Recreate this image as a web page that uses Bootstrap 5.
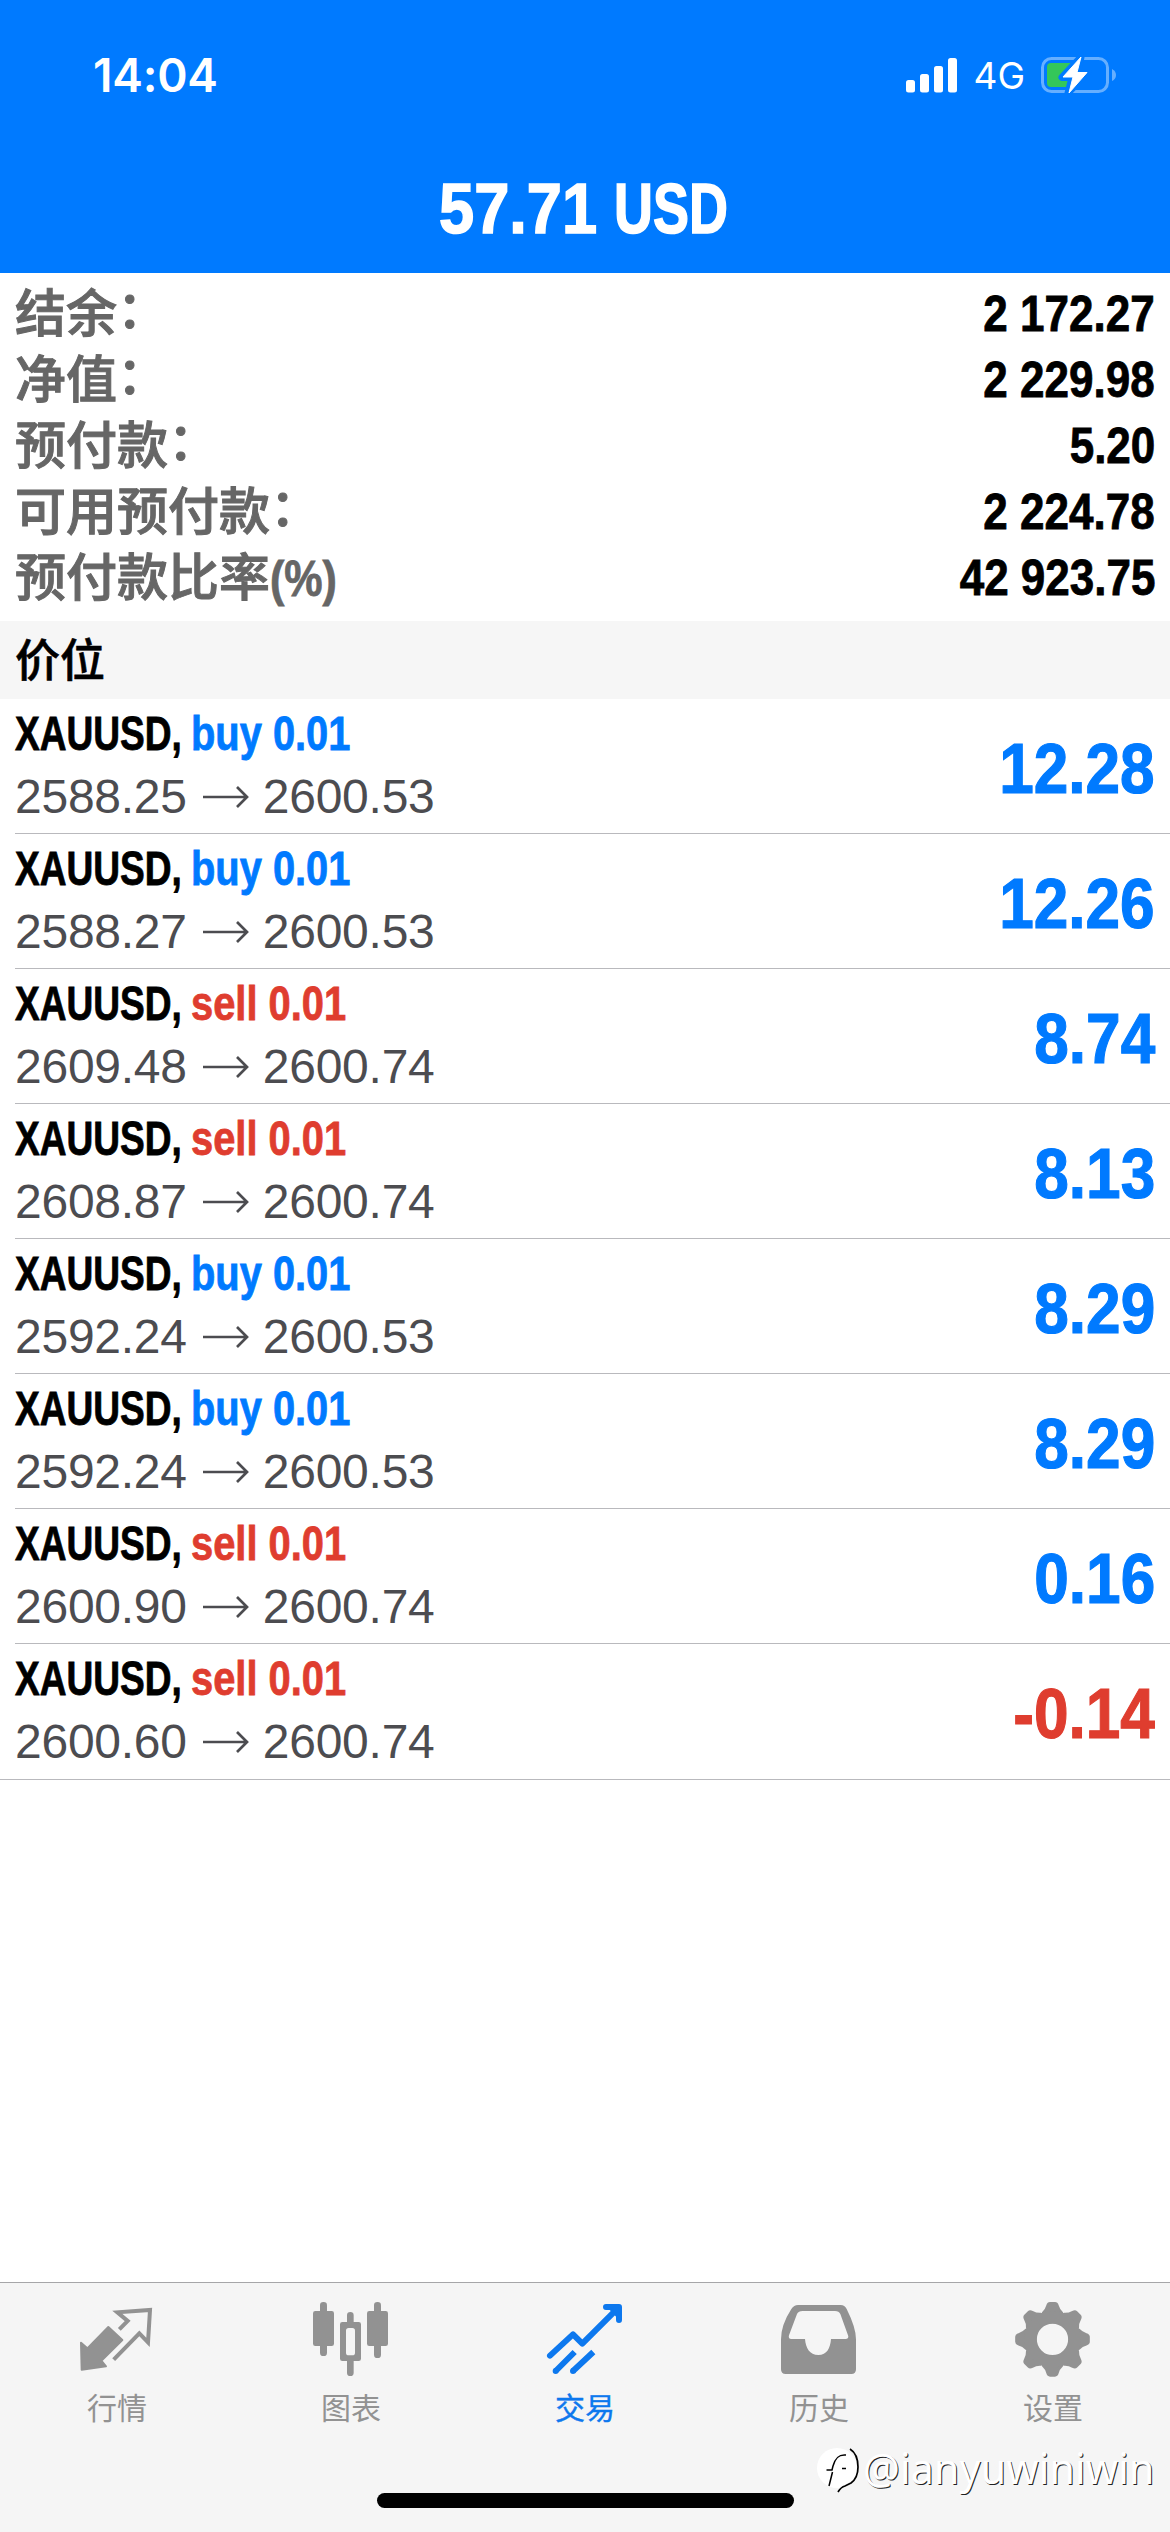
<!DOCTYPE html>
<html lang="zh-CN">
<head>
<meta charset="utf-8">
<meta name="viewport" content="width=device-width, initial-scale=1">
<title>57.71 USD</title>
<link href="https://cdn.jsdelivr.net/npm/bootstrap@5.3.0/dist/css/bootstrap.min.css" rel="stylesheet">
<style>
  body { width: 1170px; height: 2532px; margin: 0; overflow: hidden; background: #fff; color: #000; font-family: "Liberation Sans", "Noto Sans CJK SC", sans-serif; }
  .app-head { height: 273px; background: #007aff; color: #fff; }
  .status { height: 150px; padding: 0 53px 0 93px; }
  .clock { font: 600 46px/1 Inter, sans-serif; letter-spacing: -.2px; }
  .net { font: 400 37px/1 Inter, sans-serif; margin: 0 16px 0 15px; }
  .cond { display: inline-block; font-weight: 700; white-space: pre; transform-origin: 0 50%; -webkit-text-stroke: .8px currentColor; }
  .balance { font-size: 71px; line-height: 117px; padding-left: 439px; }
  .balance .cond { -webkit-text-stroke-width: 1.6px; }
  .balance .num { width: 175px; transform: scaleX(.89); }
  .balance .cur { transform: scaleX(.76); }
  .summary { padding: 8px 15px 10px 15px; }
  .sum-row { height: 66px; line-height: 66px; }
  .sum-label { font: 500 51px/58px "Noto Sans CJK SC", sans-serif; color: #666; padding-bottom: 8px; -webkit-text-stroke: 1px #666; }
  .colon { vertical-align: 4px; line-height: 1; }
  .sum-label .cond { font-family: "Liberation Sans", sans-serif; font-size: 50px; transform: scaleX(.86); }
  .sum-value { font-size: 50px; transform: scaleX(.88); transform-origin: 100% 50%; }
  .section-bar { height: 78px; background: #f6f6f6; padding-left: 15px; font: 500 45px/73px "Noto Sans CJK SC", sans-serif; -webkit-text-stroke: .6px #000; }
  .deal { height: 135px; margin-left: 15px; padding: 4px 15px 0 0; border-bottom: 1px solid #b9b9bd; }
  .deal:last-child { margin-left: 0; padding-left: 15px; height: 136px; }
  .deal-name { font-size: 48px; line-height: 62px; height: 62px; }
  .deal-name .sym { width: 176px; transform: scaleX(.772); }
  .deal-name .side { transform: scaleX(.83); }
  .deal-price { font-size: 48px; line-height: 64px; height: 64px; color: #4c4c50; letter-spacing: -.25px; }
  .arrow { width: 47px; height: 24px; margin: 0 14px 0 15px; }
  .profit { font-size: 71px; line-height: 132px; transform: scaleX(.875); transform-origin: 100% 50%; -webkit-text-stroke-width: 1.2px; }
  .up { color: #007aff; }
  .down { color: #df3d2f; }
  .tabs { height: 250px; background: #f5f5f5; border-top: 1px solid #a6a6a8; }
  .tab { color: #929292; padding-top: 17px; font: 400 30px/44px "Noto Sans CJK SC", sans-serif; }
  .tab svg { width: 78px; height: 78px; margin-bottom: 6px; }
  .tab.active { color: #0d78ee; -webkit-text-stroke: .4px currentColor; }
  .home-bar { width: 417px; height: 15px; border-radius: 8px; background: #000; left: 377px; top: 2493px; }
  .mark-by { left: 817px; top: 2445px; }
  .mark-by svg { width: 46px; height: 48px; }
  .mark-by span { font: 400 41px/46px "Noto Sans", sans-serif; letter-spacing: .2px; color: #fff; text-shadow: 1px 1px 0 #222; white-space: nowrap; padding-bottom: 4px; }
</style>
</head>
<body class="d-flex flex-column position-relative">
<header class="app-head">
  <div class="status d-flex align-items-center">
    <span class="clock me-auto">14:04</span>
    <svg width="52" height="35" viewBox="0 0 52 35" fill="#fff"><rect y="22" width="9" height="12.500" rx="2.500"/><rect x="14" y="16" width="9" height="18.500" rx="2.500"/><rect x="28" y="8" width="9" height="26.500" rx="2.500"/><rect x="42" width="9" height="34.500" rx="2.500"/></svg>
    <span class="net">4G</span>
    <svg width="76" height="40" viewBox="0 0 76 40"><rect x="1.500" y="3.500" width="65" height="33" rx="9" fill="none" stroke="#66afff" stroke-width="3"/><path d="M71 14q4 2 4 6t-4 6z" fill="#66afff"/><rect x="6" y="8" width="27" height="24" rx="4" fill="#34c759"/><path d="M40 2 21 22.500h10L27 38 47 17H37z" fill="#fff" stroke="#007aff" stroke-width="7" stroke-linejoin="round"/><path d="M40 2 22 22h10L28 38 46 17.500H36z" fill="#fff" stroke="#fff" stroke-width="1" stroke-linejoin="round"/></svg>
  </div>
  <div class="balance d-flex"><span class="cond num">57.71</span><span class="cond cur">USD</span></div>
</header>

<section class="summary">
  <div class="sum-row d-flex justify-content-between"><div class="sum-label">结余<span class="colon">：</span></div><div class="cond sum-value">2 172.27</div></div>
  <div class="sum-row d-flex justify-content-between"><div class="sum-label">净值<span class="colon">：</span></div><div class="cond sum-value">2 229.98</div></div>
  <div class="sum-row d-flex justify-content-between"><div class="sum-label">预付款<span class="colon">：</span></div><div class="cond sum-value">5.20</div></div>
  <div class="sum-row d-flex justify-content-between"><div class="sum-label">可用预付款<span class="colon">：</span></div><div class="cond sum-value">2 224.78</div></div>
  <div class="sum-row d-flex justify-content-between"><div class="sum-label">预付款比率<span class="cond">(%)</span></div><div class="cond sum-value">42 923.75</div></div>
</section>

<div class="section-bar">价位</div>

<main class="flex-grow-1" id="deals"></main>

<nav class="tabs d-flex">
  <div class="tab col d-flex flex-column align-items-center">
    <svg viewBox="0 0 234 234" fill="currentColor" stroke="currentColor"><path d="M9 128 28 145 91 81 133 120 70 182 84 199 11 209Z" stroke-width="6" stroke-linejoin="round"/><path d="M124 88 149 63 118 37 216 30 210 127 184 100 107 179" fill="none" stroke-width="12"/></svg>行情</div>
  <div class="tab col d-flex flex-column align-items-center">
    <svg viewBox="0 0 234 234" fill="currentColor"><rect x="3" y="33" width="63" height="105" rx="7"/><rect x="24" y="6" width="21" height="162" rx="10"/><path fill-rule="evenodd" d="M91 66h49q7 0 7 7v103q0 7-7 7H91q-7 0-7-7V73q0-7 7-7zm19 18q-8 0-8 8v66q0 8 8 8h11q8 0 8-8V92q0-8-8-8z"/><path d="M105 70V46q0-10 10-10t10 10v24zm0 110v38q0 10 10 10t10-10v-38z"/><rect x="165" y="33" width="63" height="105" rx="7"/><rect x="186" y="6" width="21" height="168" rx="10"/></svg>图表</div>
  <div class="tab active col d-flex flex-column align-items-center">
    <svg viewBox="0 0 234 234" fill="none" stroke="currentColor" stroke-width="18" stroke-linecap="round" stroke-linejoin="round"><path d="M12 167 81 103 109 131 215 25M180 21H219V60"/><path d="M216 24v28L190 24z" stroke-width="6" fill="currentColor"/><path d="M29 213 86 156M81 213 142 156" stroke-linecap="butt"/><path d="M29 213h0M81 213h0"/></svg>交易</div>
  <div class="tab col d-flex flex-column align-items-center">
    <svg viewBox="0 0 234 234" fill="currentColor"><path fill-rule="evenodd" d="M54 15H182Q194 15 200 27Q228 83 228 118V208Q228 222 214 222H17Q3 222 3 208V118Q3 75 34 27Q42 15 54 15ZM68 33Q55 33 51 42L27 106Q24 117 34 117H75C77 144 89 165 115 165S151 144 153 117H196Q208 117 204 106L181 42Q177 33 165 33Z"/></svg>历史</div>
  <div class="tab col d-flex flex-column align-items-center">
    <svg viewBox="0 0 234 234" fill="currentColor"><defs><path id="tooth" d="M84 37Q94 28 97 16Q100 6 108 6H123Q131 6 134 16Q137 28 147 37L154 70H77Z"/></defs><use href="#tooth"/><use href="#tooth" transform="rotate(45 115.500 118)"/><use href="#tooth" transform="rotate(90 115.500 118)"/><use href="#tooth" transform="rotate(135 115.500 118)"/><use href="#tooth" transform="rotate(180 115.500 118)"/><use href="#tooth" transform="rotate(225 115.500 118)"/><use href="#tooth" transform="rotate(270 115.500 118)"/><use href="#tooth" transform="rotate(315 115.500 118)"/><circle cx="115.500" cy="118" r="66" fill="none" stroke="currentColor" stroke-width="38"/></svg>设置</div>
</nav>

<div class="home-bar position-absolute"></div>
<div class="mark-by position-absolute d-flex align-items-center">
  <svg viewBox="0 0 46 48"><circle cx="20" cy="22" r="20" fill="#fff"/><path d="M33 3q8 5 8 18 0 11-7 16l-6 3q-4 1-7 6" fill="none" stroke="#000" stroke-width="1.700"/><path d="M29 9c-8-1-11 4-13 11l-1 4H9.500m6 2L12 40M25 22.500h4" fill="none" stroke="#000" stroke-width="1.500"/></svg>
  <span>@ianyuwiniwin</span>
</div>

<script>
  const deals = [
    ["buy", "2588.25", "2600.53", "12.28"],
    ["buy", "2588.27", "2600.53", "12.26"],
    ["sell", "2609.48", "2600.74", "8.74"],
    ["sell", "2608.87", "2600.74", "8.13"],
    ["buy", "2592.24", "2600.53", "8.29"],
    ["buy", "2592.24", "2600.53", "8.29"],
    ["sell", "2600.90", "2600.74", "0.16"],
    ["sell", "2600.60", "2600.74", "-0.14"]
  ];
  document.getElementById("deals").innerHTML = deals.map(([side, open, now, profit]) => `
    <div class="deal d-flex justify-content-between">
      <div>
        <div class="deal-name d-flex"><span class="cond sym">XAUUSD,</span><span class="cond side ${side === "buy" ? "up" : "down"}">${side} 0.01</span></div>
        <div class="deal-price d-flex align-items-center"><span>${open}</span><svg class="arrow" viewBox="0 0 47 24" fill="none" stroke="currentColor" stroke-width="2.700"><path d="M1 12H45M35 2 45 12 35 22"/></svg><span>${now}</span></div>
      </div>
      <div class="cond profit ${profit < 0 ? "down" : "up"}">${profit}</div>
    </div>`).join("");
</script>
<script src="https://cdn.jsdelivr.net/npm/bootstrap@5.3.0/dist/js/bootstrap.bundle.min.js"></script>
</body>
</html>
